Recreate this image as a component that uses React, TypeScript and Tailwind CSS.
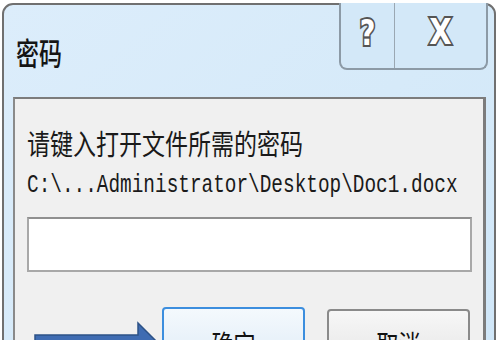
import React from "react";

export default function App() {
  const cjk = { fontFamily: '"Noto Sans CJK SC", "Noto Sans", sans-serif' };
  return (
    <div className="w-[500px] h-[340px] overflow-hidden bg-white relative">
      <div className="ml-[2px] mt-[3px] w-[494px] h-[420px] rounded-t-[11px] border-2 border-[#707070] bg-gradient-to-br from-[#dcedfb] via-[#d6eaf9] to-[#cfe6f8] flex flex-col">
        {/* title bar */}
        <div className="h-[92px] flex items-start shrink-0">
          <div
            className="ml-[12px] mt-[31px] text-[23px] leading-[30px] text-[#151515] font-medium inline-block scale-y-[1.35]"
            style={cjk}
          >
            密码
          </div>
          <div className="ml-auto mr-[6px] flex h-[67px] -mt-[2px] border-2 border-t-0 border-[#8c9aa6] rounded-b-[8px] bg-[#d3e8f8] overflow-hidden">
            <div className="w-[54px] flex items-center justify-center border-r border-[#9aa7b2]">
              <span
                className="text-[27px] font-bold text-white leading-none [-webkit-text-stroke:3px_#555] [paint-order:stroke_fill] -mt-[6px] inline-block scale-y-[1.3]"
                style={{ fontFamily: '"DejaVu Sans", sans-serif' }}
              >
                ?
              </span>
            </div>
            <div className="w-[91px] flex items-center justify-center">
              <span
                className="text-[29px] font-bold text-white leading-none [-webkit-text-stroke:3px_#555] [paint-order:stroke_fill] -mt-[6px] inline-block scale-y-[1.25]"
                style={{ fontFamily: '"DejaVu Sans", sans-serif' }}
              >
                X
              </span>
            </div>
          </div>
        </div>
        {/* client area */}
        <div className="ml-[9px] w-[473px] flex-1 bg-[#f0f0f0] border-t-2 border-l-2 border-r-[3px] border-[#7c7c7c] border-l-[#8a8a8a] pl-[12px] pt-[27px]">
          <div
            className="text-[23px] leading-[30px] text-[#1a1a1a] inline-block scale-y-[1.25] origin-top mt-[-2px]"
            style={cjk}
          >
            请键入打开文件所需的密码
          </div>
          <div
            className="mt-[18px] text-[19.4px] leading-[24px] text-[#1a1a1a] whitespace-nowrap scale-y-[1.35] origin-center"
            style={{ fontFamily: '"Liberation Mono", monospace' }}
          >
            C:\...Administrator\Desktop\Doc1.docx
          </div>
          <div className="mt-[20px] w-[445px] h-[55px] bg-white border-2 border-[#a8a8a8] border-t-[#909090]" />
          <div className="mt-[35px] flex gap-[22px] pl-[135px]">
            <div
              className="w-[143px] h-[50px] rounded-[4px] border-2 border-[#3c8ede] bg-gradient-to-b from-[#f4f9fd] to-[#e3eef8] flex justify-center pt-[16px] text-[22px] leading-[28px] text-[#111]"
              style={cjk}
            >
              <span className="inline-block scale-y-[1.3] origin-top">确定</span>
            </div>
            <div
              className="w-[143px] h-[50px] mt-[2px] rounded-[4px] border-2 border-[#8a8a8a] bg-gradient-to-b from-[#f7f7f7] to-[#e8e8e8] flex justify-center pt-[14px] text-[22px] leading-[28px] text-[#111]"
              style={cjk}
            >
              <span className="inline-block scale-y-[1.3] origin-top">取消</span>
            </div>
          </div>
        </div>
      </div>
      {/* arrow overlay */}
      <svg className="absolute left-0 top-0" width="500" height="340">
        <polygon
          points="35,335 138,335 138,323 158,343 138,363 138,351 35,351"
          fill="#3f6cb2"
          stroke="#2d5287"
          strokeWidth="1.5"
        />
      </svg>
    </div>
  );
}
